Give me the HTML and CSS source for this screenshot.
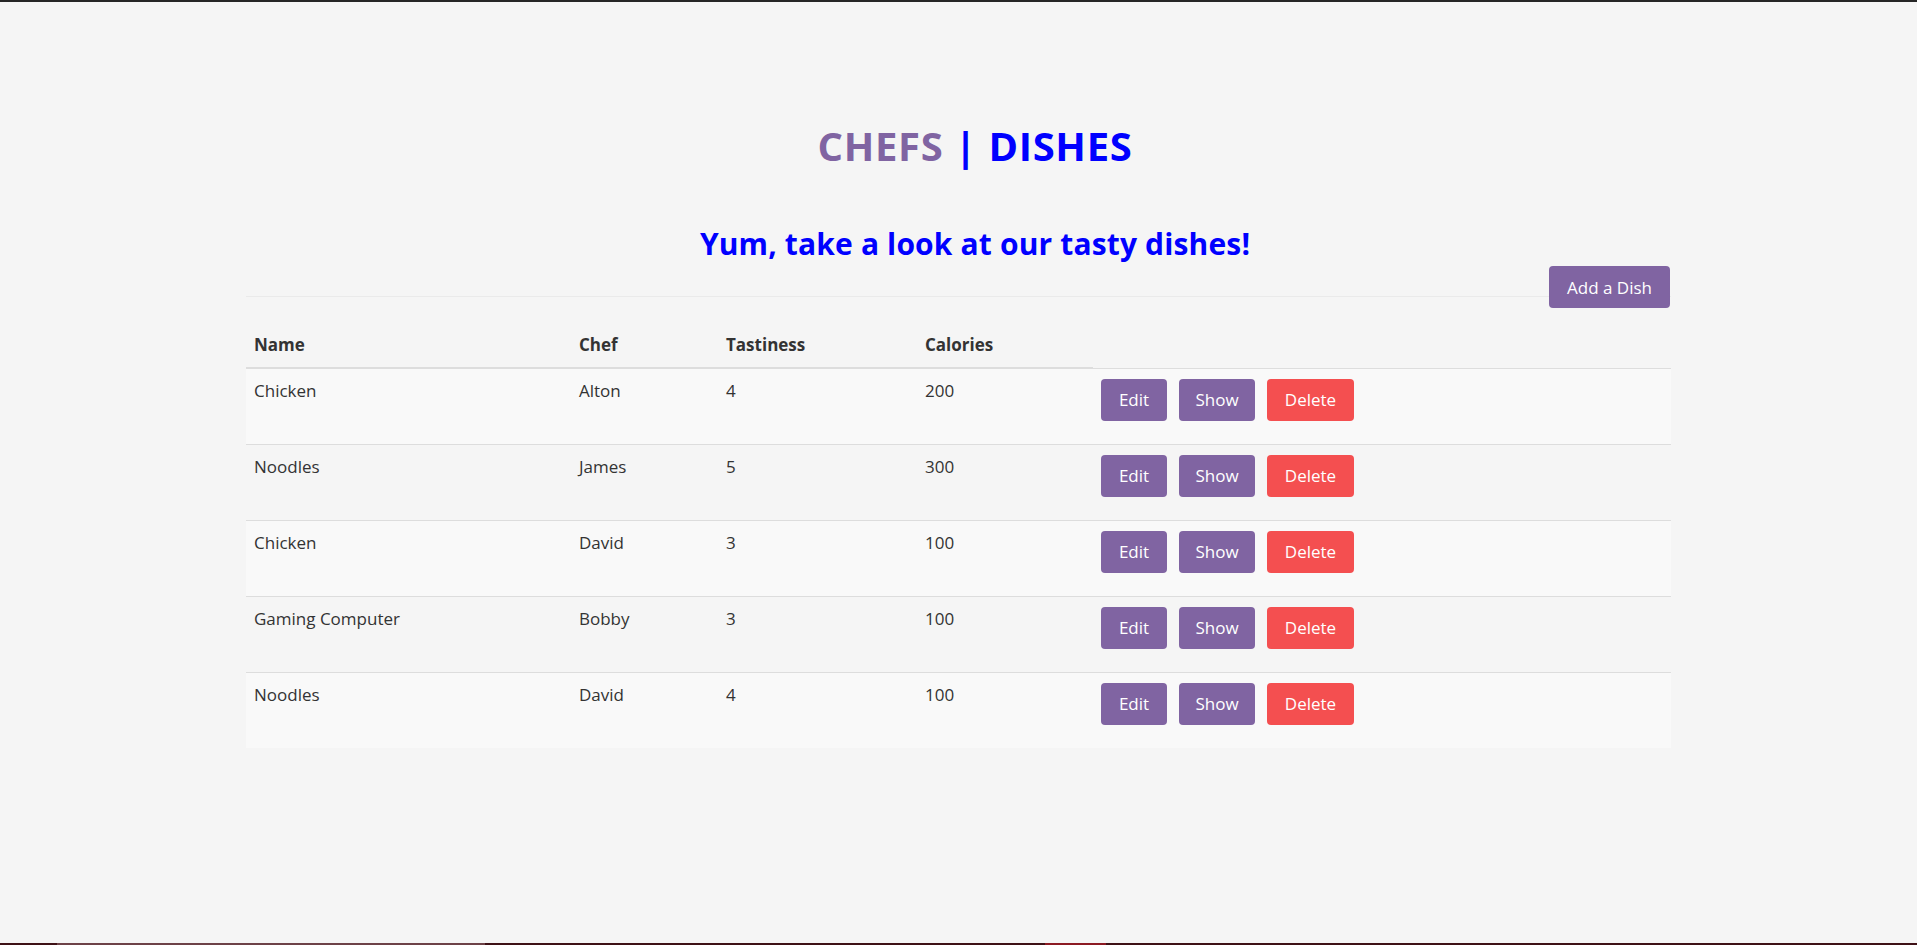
FILE: index.html
```html
<!DOCTYPE html>
<html lang="en">
<head>
<meta charset="utf-8">
<title>Chefs | Dishes</title>
<link rel="stylesheet" href="styles.css">
</head>
<body>
<div class="page">
  <header class="hero">
    <h1 class="title"><span class="title-chefs">CHEFS</span> | DISHES</h1>
    <h2 class="subtitle">Yum, take a look at our tasty dishes!</h2>
  </header>
  <div class="toolbar">
    <button class="btn btn-purple btn-add">Add a Dish</button>
  </div>
  <table class="dishes">
    <colgroup>
      <col class="col-name">
      <col class="col-chef">
      <col class="col-taste">
      <col class="col-cal">
      <col class="col-actions">
    </colgroup>
    <thead>
      <tr><th>Name</th><th>Chef</th><th>Tastiness</th><th>Calories</th></tr>
    </thead>
    <tbody>
      <tr><td>Chicken</td><td>Alton</td><td>4</td><td>200</td><td><div class="actions"><button class="btn btn-purple btn-edit">Edit</button><button class="btn btn-purple btn-show">Show</button><button class="btn btn-red btn-delete">Delete</button></div></td></tr>
      <tr><td>Noodles</td><td>James</td><td>5</td><td>300</td><td><div class="actions"><button class="btn btn-purple btn-edit">Edit</button><button class="btn btn-purple btn-show">Show</button><button class="btn btn-red btn-delete">Delete</button></div></td></tr>
      <tr><td>Chicken</td><td>David</td><td>3</td><td>100</td><td><div class="actions"><button class="btn btn-purple btn-edit">Edit</button><button class="btn btn-purple btn-show">Show</button><button class="btn btn-red btn-delete">Delete</button></div></td></tr>
      <tr><td>Gaming Computer</td><td>Bobby</td><td>3</td><td>100</td><td><div class="actions"><button class="btn btn-purple btn-edit">Edit</button><button class="btn btn-purple btn-show">Show</button><button class="btn btn-red btn-delete">Delete</button></div></td></tr>
      <tr><td>Noodles</td><td>David</td><td>4</td><td>100</td><td><div class="actions"><button class="btn btn-purple btn-edit">Edit</button><button class="btn btn-purple btn-show">Show</button><button class="btn btn-red btn-delete">Delete</button></div></td></tr>
    </tbody>
  </table>
</div>
<div class="taskbar">
  <span class="seg seg-dark seg-w1"></span>
  <span class="seg seg-light seg-w2"></span>
  <span class="seg seg-dark seg-w3"></span>
  <span class="seg seg-red seg-w4"></span>
  <span class="seg seg-dark seg-fill"></span>
</div>
</body>
</html>
```
FILE: styles.css
```css
* { box-sizing: border-box; }

html, body { margin: 0; padding: 0; }

body {
  background: #f5f5f5;
  color: #333;
  font-family: "Open Sans", "DejaVu Sans", sans-serif;
  font-size: 17px;
  border-top: 2px solid #262626;
  min-height: 100vh;
  display: flex;
  flex-direction: column;
}

.page {
  width: 1425px;
  margin: 0 auto;
  padding-top: 122px;
  flex: 1 0 auto;
}

.hero {
  padding-left: 33px;
  text-align: center;
}

.title {
  margin: 0;
  font-size: 40px;
  line-height: 43px;
  letter-spacing: 0.7px;
  font-weight: 700;
  color: #0000ff;
}

.title-chefs { color: #8064a2; }

.subtitle {
  margin: 60px 0 0;
  font-size: 30px;
  line-height: 33px;
  letter-spacing: 0.15px;
  font-weight: 700;
  color: #0000ff;
}

.toolbar {
  margin-top: 6px;
  height: 31px;
  border-bottom: 1px solid #eaeaea;
  display: flex;
  justify-content: flex-end;
  align-items: flex-start;
  padding-right: 1px;
}

.btn {
  font-family: "Open Sans", "DejaVu Sans", sans-serif;
  font-size: 17px;
  color: #fff;
  border: 0;
  border-radius: 4px;
  height: 42px;
  padding: 0;
  display: inline-flex;
  align-items: center;
  justify-content: center;
  flex-shrink: 0;
}

.btn-purple { background: #8064a2; }
.btn-red { background: #f44f50; }

.btn-add { width: 121px; }
.btn-edit { width: 66px; }
.btn-show { width: 76px; }
.btn-delete { width: 87px; }

.dishes {
  width: 100%;
  margin-top: 25px;
  border-collapse: collapse;
  table-layout: fixed;
}

.col-name { width: 325px; }
.col-chef { width: 147px; }
.col-taste { width: 199px; }
.col-cal { width: 176px; }
.col-actions { width: 578px; }

.dishes th {
  text-align: left;
  font-weight: 700;
  line-height: 27px;
  padding: 9px 8px 9px;
  border-bottom: 2px solid #dddddd;
}

.dishes td {
  vertical-align: top;
  line-height: 27px;
  padding: 8px;
  border-top: 1px solid #dddddd;
}

.dishes tbody tr:nth-child(odd) { background: #f9f9f9; }

.actions {
  display: flex;
  gap: 12px;
  padding: 2px 0 15px;
}

.taskbar {
  display: flex;
  height: 2px;
  flex: 0 0 2px;
}

.seg { display: block; height: 2px; }
.seg-dark { background: #3e1116; }
.seg-light { background: #6d4247; }
.seg-red { background: #8c1a23; }
.seg-w1 { width: 57px; }
.seg-w2 { width: 428px; }
.seg-w3 { width: 560px; }
.seg-w4 { width: 61px; }
.seg-fill { flex: 1; }
```
